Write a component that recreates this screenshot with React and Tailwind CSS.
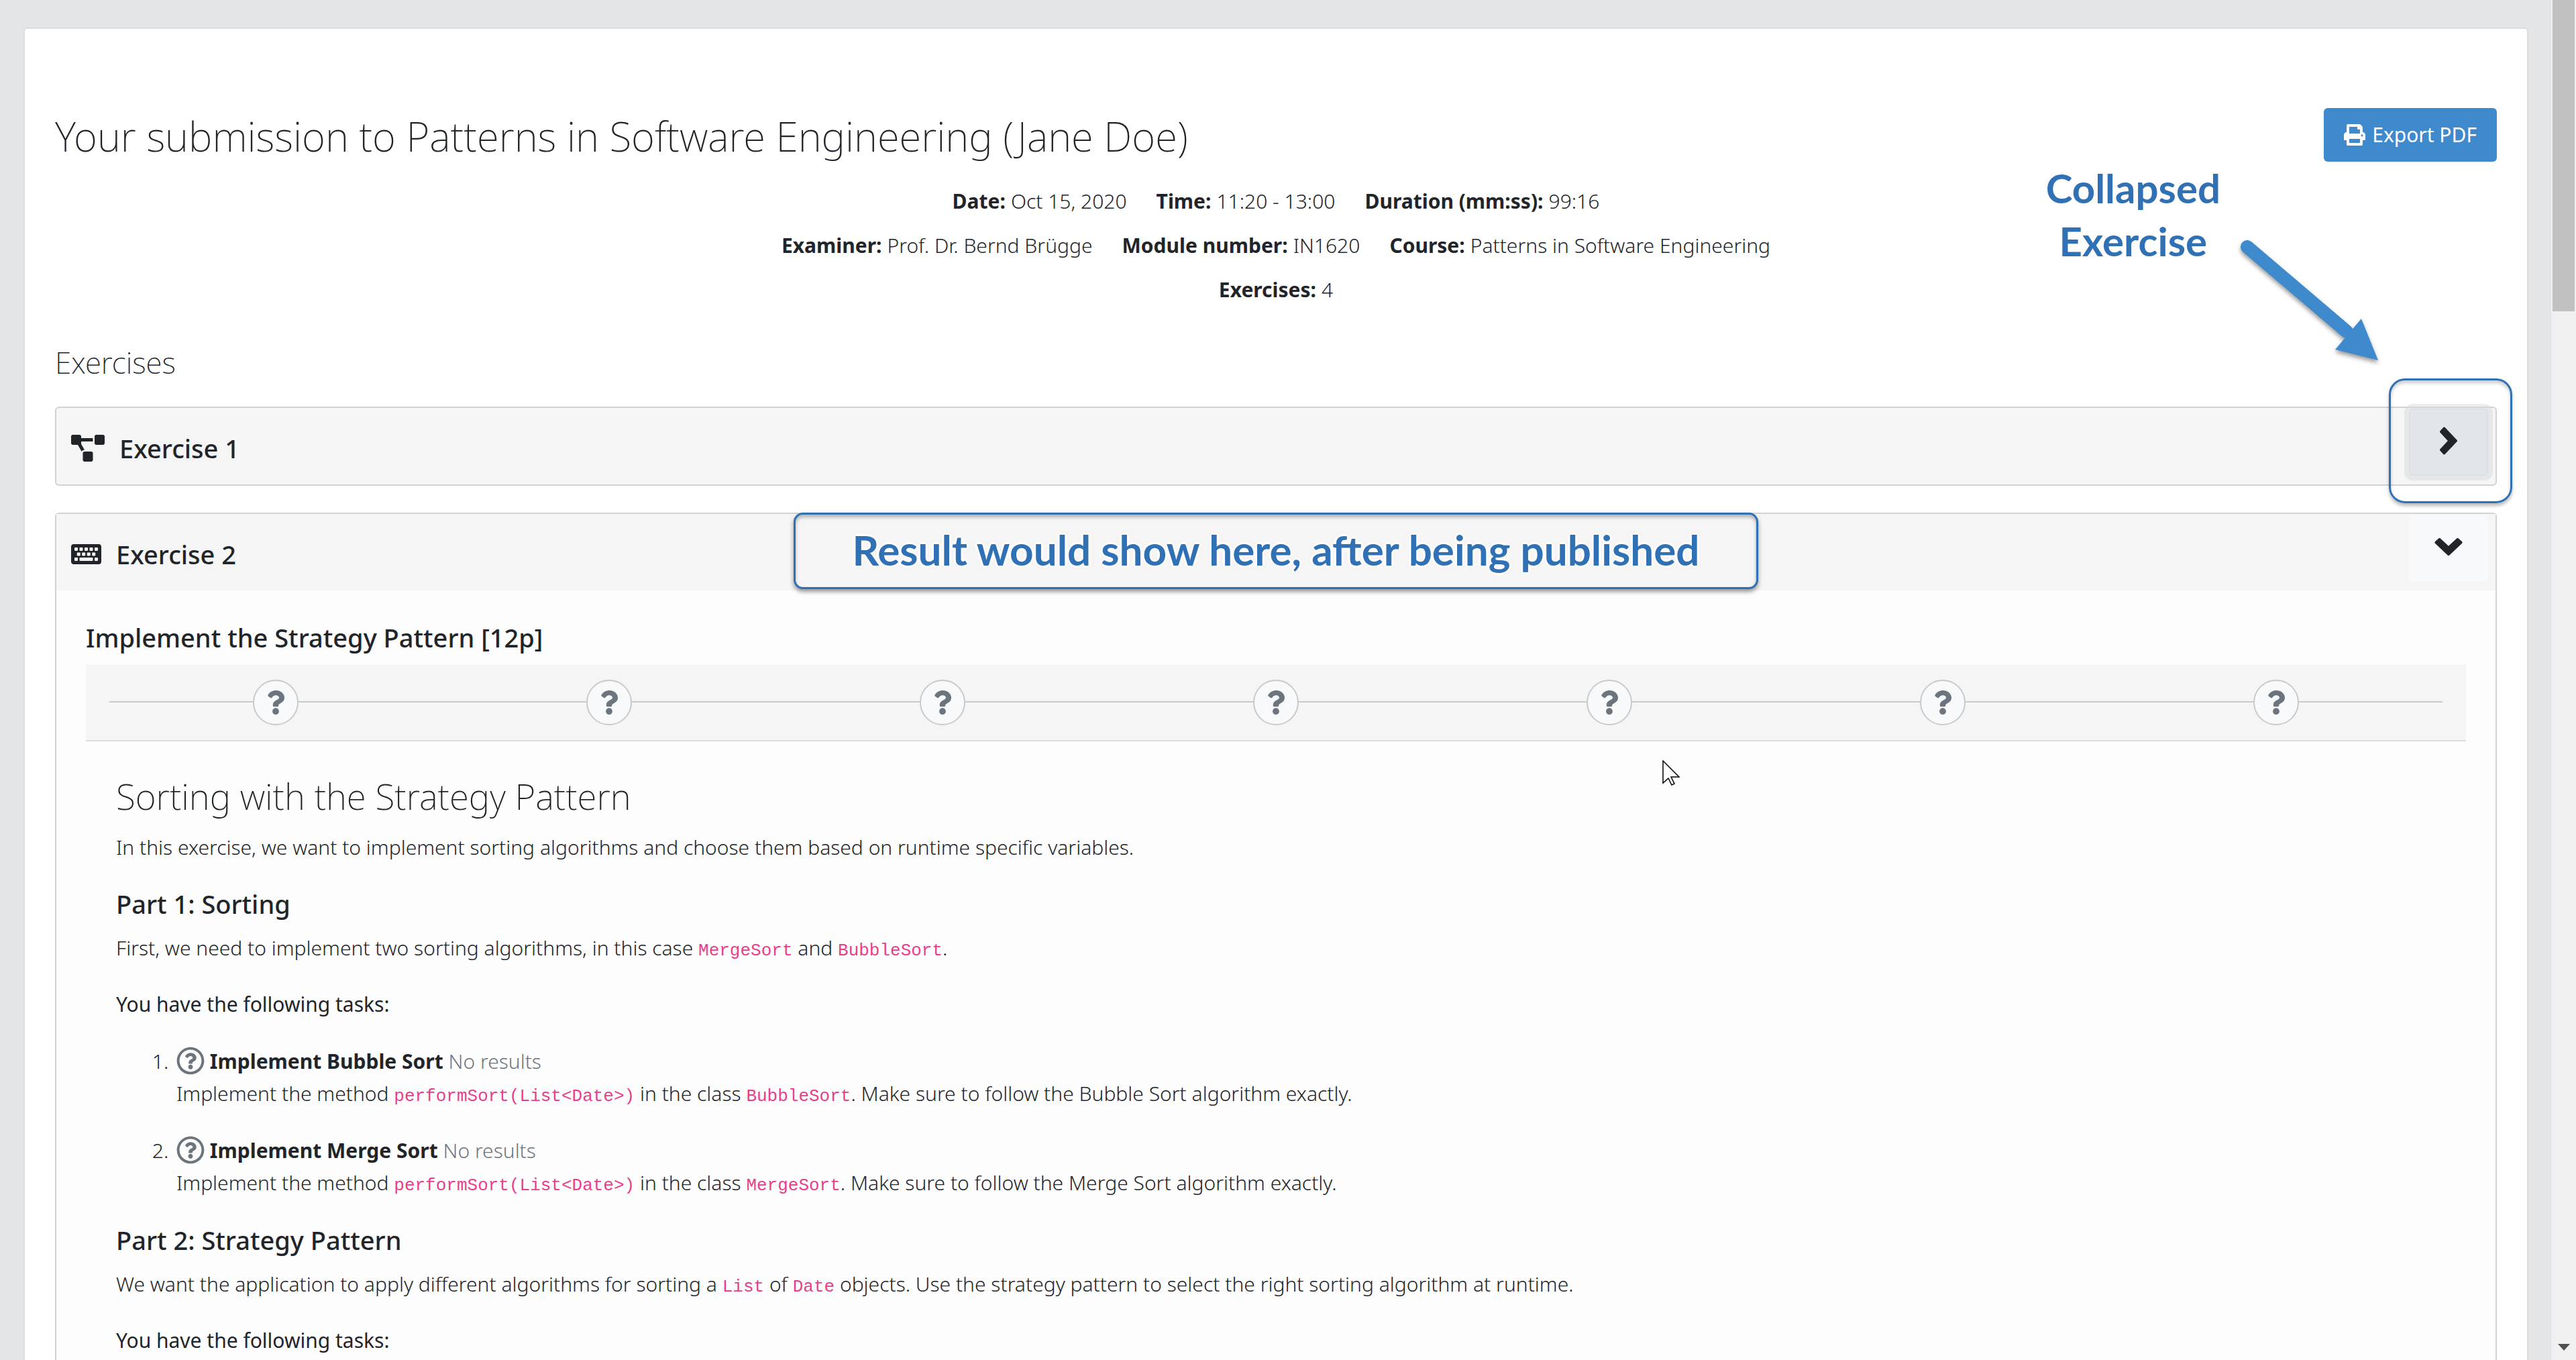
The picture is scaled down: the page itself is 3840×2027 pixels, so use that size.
import { FaKeyboard, FaPrint, FaProjectDiagram, FaQuestion, FaRegQuestionCircle } from "react-icons/fa";

const Code = ({ children }) => (
  <code className="font-['Liberation_Mono',monospace] text-[26px] leading-none font-normal text-[#e83e8c]">
    {children}
  </code>
);

const Chevron = ({ className }) => (
  <svg className={className} viewBox="0 0 26 42" aria-hidden="true">
    <path
      d="M6.500 2.500 24 21 6.500 39.500 2 34.500 14.500 21 2 7.500Z"
      fill="currentColor"
      stroke="currentColor"
      strokeWidth="4"
      strokeLinejoin="round"
    />
  </svg>
);

const Meta = ({ label, children }) => (
  <div className="flex gap-[8px]">
    <dt className="font-bold">{label}</dt>
    <dd>{children}</dd>
  </div>
);

const Task = ({ title, method, cls, algorithm }) => (
  <li className="pl-[4px]">
    <FaRegQuestionCircle className="inline size-[42px] align-[-9px] text-[#6c757d]" />{" "}
    <strong className="font-bold">{title}</strong> <span className="text-[#6c757d]">No results</span>
    <br />
    Implement the method <Code>{method}</Code> in the class <Code>{cls}</Code>. Make sure to follow the {algorithm}{" "}
    algorithm exactly.
  </li>
);

export default function App() {
  return (
    <div className="flex h-screen overflow-hidden bg-[#e4e5e6] font-['Noto_Sans',sans-serif] text-[30px] leading-[48px] font-light text-[#212529]">
      <main className="relative mt-[41px] mr-[34px] ml-[35px] min-w-0 flex-1 rounded-t-[6px] border-2 border-b-0 border-[#dcdddd] bg-white pt-[118px] pr-[45px] pl-[45px]">
        <header className="flex h-[80px] items-center justify-between">
          <h1 className="pt-[4px] text-[60px] leading-[80px] font-extralight">
            Your submission to Patterns in Software Engineering (Jane Doe)
          </h1>
          <button className="flex h-[80px] items-center gap-[10px] rounded-[6px] bg-[#3e8acc] px-[30px] text-[30px] font-normal text-white">
            <FaPrint className="size-[32px]" />
            Export PDF
          </button>
        </header>

        <dl className="flex flex-col items-center gap-[18px] pt-[35px]">
          <div className="flex gap-[44px]">
            <Meta label="Date:">Oct 15, 2020</Meta>
            <Meta label="Time:">11:20 - 13:00</Meta>
            <Meta label="Duration (mm:ss):">99:16</Meta>
          </div>
          <div className="flex gap-[44px]">
            <Meta label="Examiner:">Prof. Dr. Bernd Brügge</Meta>
            <Meta label="Module number:">IN1620</Meta>
            <Meta label="Course:">Patterns in Software Engineering</Meta>
          </div>
          <Meta label="Exercises:">4</Meta>
        </dl>

        <h2 className="mt-[54px] text-[44px] leading-[60px] font-extralight">Exercises</h2>

        <section className="mt-[36px] flex h-[118px] items-center justify-between rounded-[6px] border-2 border-[#d2d2d2] bg-[#f5f5f5] px-[22px]">
          <h3 className="flex items-center gap-[22px] pt-[6px] text-[38px] font-medium">
            <FaProjectDiagram className="h-[40px] w-[50px]" />
            Exercise 1
          </h3>
          <div className="relative -mr-[11px] mb-[12px]">
            <button
              aria-label="Expand exercise 1"
              className="flex h-[100px] w-[118px] items-center justify-center rounded-[6px] border-2 border-[#dae0e5] bg-[#e2e6ea] pb-[4px] shadow-[0_0_0_7px_#d8d9da80]"
            >
              <Chevron className="h-[42px] w-[26px]" />
            </button>
            <div className="pointer-events-none absolute -top-[45px] -left-[30px] h-[186px] w-[184px] rounded-[24px] border-3 border-[#3070b5] shadow-[0_4px_5px_#0004,inset_0_4px_5px_#0003]" />
          </div>
        </section>

        <section className="mt-[40px] rounded-[6px] border-2 border-[#d2d2d2] bg-[#fdfdfd] pb-[48px]">
          <div className="relative flex h-[114px] items-center justify-between bg-[#f5f5f5] px-[22px]">
            <h3 className="flex items-center gap-[22px] pt-[6px] text-[38px] font-medium">
              <FaKeyboard className="h-[40px] w-[45px]" />
              Exercise 2
            </h3>
            <p className="absolute top-[-2px] left-1/2 flex h-[114px] w-[1438px] -translate-x-1/2 items-center justify-center rounded-[14px] border-3 border-[#3070b5] bg-[#f5f5f5] pb-[4px] font-['Lato',sans-serif] text-[62px] font-bold text-[#3070b5] shadow-[0_4px_6px_#0006,inset_0_4px_5px_#0004] [text-shadow:3px_0_#fff,-3px_0_#fff,0_3px_#fff,0_-3px_#fff]">
              Result would show here, after being published
            </p>
            <button
              aria-label="Collapse exercise 2"
              className="-mr-[11px] mb-[12px] flex h-[100px] w-[118px] items-center justify-center rounded-[6px] bg-[#f8f9fa] pb-[4px]"
            >
              <Chevron className="h-[42px] w-[26px] rotate-90" />
            </button>
          </div>

          <div className="px-[44px] pt-[46px]">
            <h4 className="text-[38px] font-medium">Implement the Strategy Pattern [12p]</h4>
            <div className="mt-[17px] border-b-2 border-[#dcdcdc] bg-[#f5f5f5] px-[35px]">
              <div className="relative flex h-[112px] items-center">
                <div className="absolute inset-x-0 top-[54px] h-[2px] bg-[#cacaca]" />
                {Array.from({ length: 7 }, (_, i) => (
                  <div key={i} className="relative flex flex-1 justify-center">
                    <div className="flex size-[68px] items-center justify-center rounded-full border-2 border-[#cacaca] bg-[#f8f9fa]">
                      <FaQuestion className="size-[36px] text-[#6c757d]" />
                    </div>
                  </div>
                ))}
              </div>
            </div>

            <article className="px-[45px] pt-[49px]">
              <h2 className="text-[53px] leading-[66px] font-extralight">Sorting with the Strategy Pattern</h2>
              <p className="mt-[19px]">
                In this exercise, we want to implement sorting algorithms and choose them based on runtime specific
                variables.
              </p>
              <h3 className="mt-[36px] text-[38px] font-medium">Part 1: Sorting</h3>
              <p className="mt-[18px]">
                First, we need to implement two sorting algorithms, in this case <Code>MergeSort</Code> and{" "}
                <Code>BubbleSort</Code>.
              </p>
              <p className="mt-[36px] font-normal">You have the following tasks:</p>
              <ol className="mt-[37px] list-decimal space-y-[37px] pl-[86px]">
                <Task
                  title="Implement Bubble Sort"
                  method="performSort(List<Date>)"
                  cls="BubbleSort"
                  algorithm="Bubble Sort"
                />
                <Task
                  title="Implement Merge Sort"
                  method="performSort(List<Date>)"
                  cls="MergeSort"
                  algorithm="Merge Sort"
                />
              </ol>
              <h3 className="mt-[37px] text-[38px] font-medium">Part 2: Strategy Pattern</h3>
              <p className="mt-[18px]">
                We want the application to apply different algorithms for sorting a <Code>List</Code> of{" "}
                <Code>Date</Code> objects. Use the strategy pattern to select the right sorting algorithm at runtime.
              </p>
              <p className="mt-[36px] font-normal">You have the following tasks:</p>
            </article>
          </div>
        </section>

        <div className="absolute top-[198px] right-[457px] text-center font-['Lato',sans-serif] text-[60px] leading-[79px] font-bold text-[#3070b5]">
          Collapsed
          <br />
          Exercise
        </div>
        <svg
          className="absolute top-[307px] right-[207px] h-[210px] w-[230px] drop-shadow-[0_4px_3px_#0006]"
          viewBox="0 0 230 210"
          fill="none"
        >
          <path d="M20 18 168 144" stroke="#3e8acc" strokeWidth="20" strokeLinecap="round" />
          <path d="M190 125 151 171 215 187Z" fill="#3e8acc" />
        </svg>
        <svg className="absolute top-[1090px] left-[2441px] h-[42px] w-[30px]" viewBox="0 0 30 42">
          <path d="M1 1v33l8-7 5 10 4-2-5-10h12Z" fill="#fff" stroke="#000" strokeWidth="1.5" />
        </svg>
      </main>
      <aside className="flex w-[37px] flex-col items-center justify-between bg-[#f0f0f0]">
        <div className="h-[464px] w-[33px] bg-[#c1c1c1]" />
        <svg className="mb-[14px] h-[10px] w-[18px]" viewBox="0 0 18 10">
          <path d="M0 0h18l-9 10Z" fill="#505050" />
        </svg>
      </aside>
    </div>
  );
}
